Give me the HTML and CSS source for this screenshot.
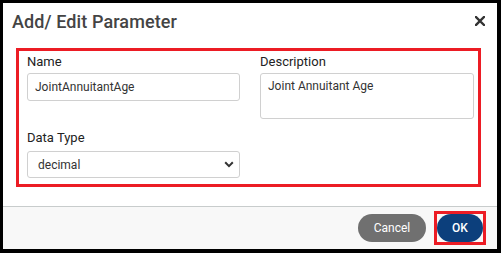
FILE: index.html
```html
<!DOCTYPE html>
<html lang="en">
<head>
<meta charset="UTF-8">
<title>Add/ Edit Parameter</title>
<link rel="stylesheet" href="styles.css">
</head>
<body>
  <div class="dialog">
    <div class="dialog-header">
      <h1 class="title">Add/ Edit Parameter</h1>
      <button class="close" aria-label="Close">
        <svg width="10" height="10" viewBox="0 0 10 10"><path d="M1 1L9 9M9 1L1 9" stroke="#333" stroke-width="2.4" stroke-linecap="square"/></svg>
      </button>
    </div>
    <div class="dialog-body">
      <div class="fields">
        <div class="field">
          <label class="label">Name</label>
          <input class="input" type="text" value="JointAnnuitantAge">
        </div>
        <div class="field">
          <label class="label">Description</label>
          <textarea class="input textarea">Joint Annuitant Age</textarea>
        </div>
        <div class="field">
          <label class="label">Data Type</label>
          <div class="select">
            <span>decimal</span>
            <svg width="10" height="7" viewBox="0 0 10 7"><path d="M1.2 1.3L5 5.1L8.8 1.3" fill="none" stroke="#333" stroke-width="2"/></svg>
          </div>
        </div>
      </div>
    </div>
    <div class="dialog-footer">
      <button class="btn btn-cancel">Cancel</button>
      <div class="highlight">
        <button class="btn btn-ok">OK</button>
      </div>
    </div>
  </div>
</body>
</html>
```

FILE: styles.css
```css
html, body {
  margin: 0;
  padding: 0;
}

body {
  background: #000;
  width: 501px;
  height: 253px;
  font-family: Roboto, "Liberation Sans", sans-serif;
  color: #333;
  overflow: hidden;
}

.dialog {
  margin: 3px 4px 0 3px;
  height: 246px;
  background: #fff;
  display: flex;
  flex-direction: column;
}

.dialog-header {
  height: 36px;
  display: flex;
  align-items: center;
  justify-content: space-between;
  padding: 0 12px 0 9px;
}

.title {
  margin: 0;
  font-size: 18px;
  font-weight: 500;
  color: #444;
  letter-spacing: 0.1px;
}

.close {
  border: 0;
  background: none;
  padding: 0;
  width: 10px;
  height: 10px;
  display: flex;
}

.dialog-body {
  padding: 9px 16px 0 13px;
  flex: 1;
}

.fields {
  border: 3px solid #ec1c24;
  padding: 3px 4px 6px 8px;
  display: grid;
  grid-template-columns: 213px 214px;
  column-gap: 20px;
  row-gap: 11px;
  align-items: start;
}

.field {
  display: flex;
  flex-direction: column;
}

.label {
  font-size: 13px;
  line-height: 15px;
  color: #222;
  margin-bottom: 4px;
}

.input {
  box-sizing: border-box;
  height: 28px;
  border: 1px solid #d0d0d0;
  border-radius: 3px;
  padding: 0 7px;
  font-family: inherit;
  font-size: 12px;
  color: #333;
  outline: none;
}

.textarea {
  height: 46px;
  resize: none;
  padding: 5px 7px;
  line-height: 14px;
}

.select {
  box-sizing: border-box;
  height: 27px;
  margin-top: 2px;
  border: 1px solid #d0d0d0;
  border-radius: 3px;
  display: flex;
  align-items: center;
  justify-content: space-between;
  padding: 0 5px 0 10px;
  font-size: 12px;
  color: #333;
}

.dialog-footer {
  border-top: 1px solid #c8cccc;
  background: #f8f8f8;
  height: 42px;
  display: flex;
  align-items: center;
  justify-content: flex-end;
  padding: 0 11px 0 0;
  gap: 8px;
}

.btn {
  border: 0;
  border-radius: 14px;
  height: 28px;
  font-family: inherit;
  font-size: 12px;
  color: #fff;
  padding: 0;
}

.btn-cancel {
  width: 68px;
  background: #707070;
}

.highlight {
  border: 3px solid #ec1c24;
  display: flex;
}

.btn-ok {
  width: 46px;
  background: #0c3f7c;
  font-weight: 500;
}
```
